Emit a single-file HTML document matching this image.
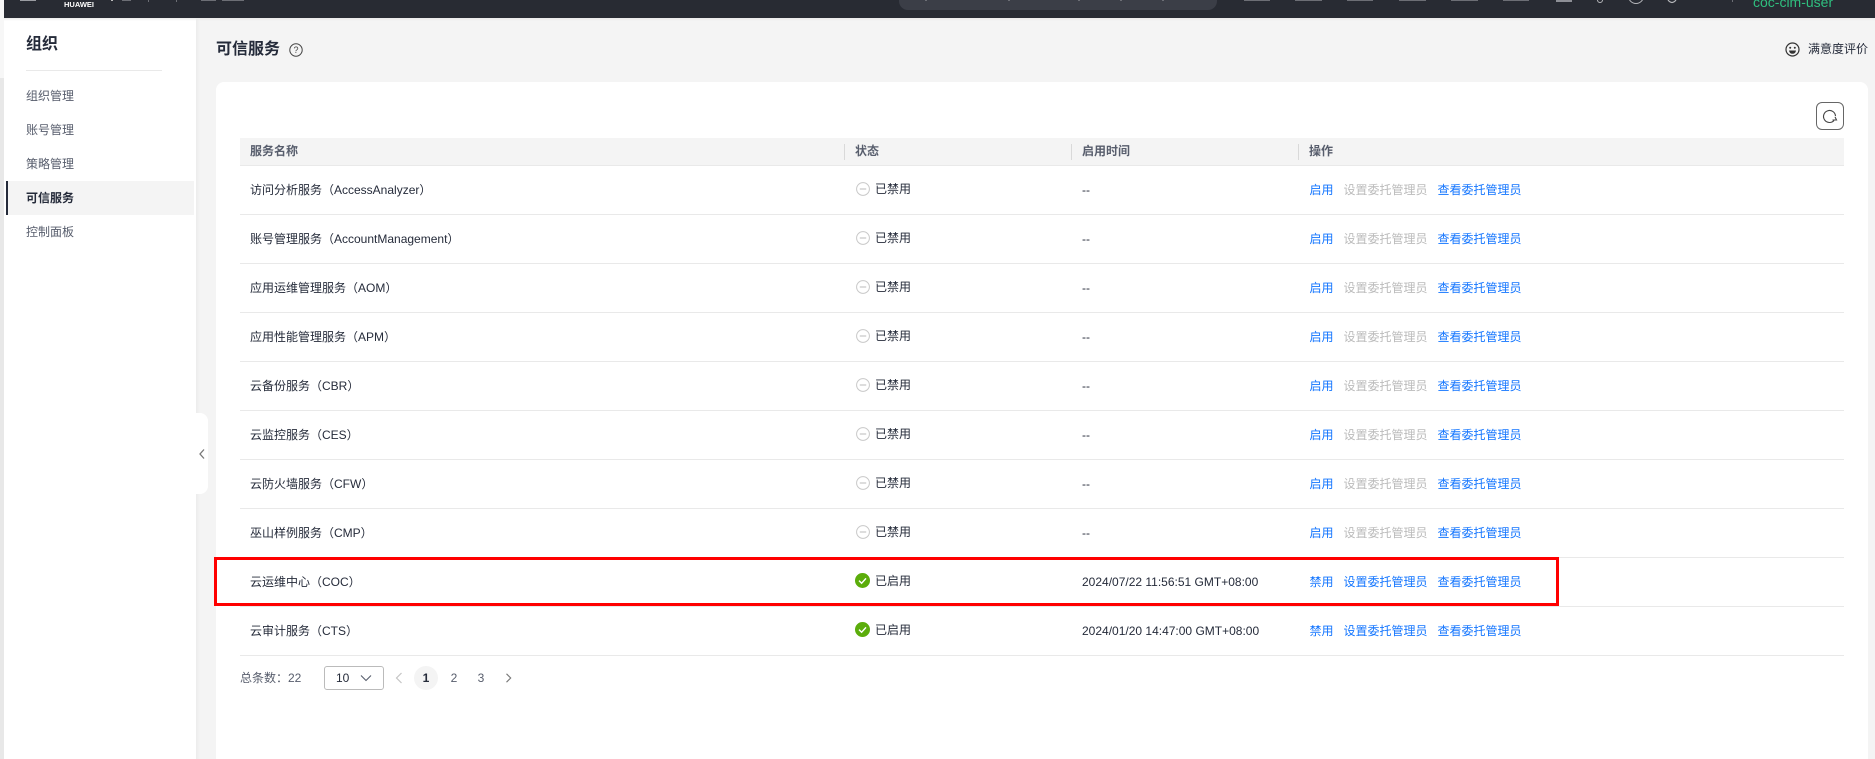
<!DOCTYPE html>
<html lang="zh-CN">
<head>
<meta charset="utf-8">
<title>可信服务</title>
<style>
html,body{margin:0;padding:0;width:1875px;height:759px;overflow:hidden;background:#f4f4f4}
body{position:relative;font-family:"Liberation Sans","Noto Sans CJK SC",sans-serif;font-size:12px;color:#252b3a}
div,span,svg{position:absolute;white-space:nowrap}
.b{background:#6c6e75;height:1px;top:0}
.m{left:26px;line-height:20px;color:#575d6c;width:120px}
.row{left:240px;width:1604px;height:48px;border-bottom:1px solid #e9e9e9}
.row span{line-height:48px;top:0}
.n{left:10px}
.st{left:635px;top:-1px!important}
.t{left:842px}
.row .t{top:-0.5px}
.a1{left:1069.5px;color:#1476ff}
.a2{left:1103.5px;color:#bbb}
.a3{left:1197.5px;color:#1476ff}
.h{line-height:26px;color:#575d6c;font-weight:bold;top:0}
.sep{width:1px;height:16px;top:6px;background:#d9d9d9}
.pg{top:666px;line-height:24px;width:24px;text-align:center;color:#575d6c}
</style>
</head>
<body>
<!-- left strip -->
<div style="left:0;top:0;width:4px;height:78px;background:#f7f7f7"></div>
<div style="left:0;top:78px;width:4px;height:681px;background:#e8e8e8"></div>

<!-- sidebar -->
<div style="left:4px;top:18px;width:192px;height:741px;background:#fff"></div>
<div style="left:196px;top:18px;width:4px;height:741px;background:linear-gradient(to right,#ececec,#f4f4f4)"></div>
<div style="left:26px;top:35px;font-size:16px;line-height:20px;font-weight:bold;color:#252b3a">组织</div>
<div style="left:26px;top:70px;width:136px;height:1px;background:#e9e9e9"></div>
<div class="m" style="top:86px">组织管理</div>
<div class="m" style="top:120px">账号管理</div>
<div class="m" style="top:154px">策略管理</div>
<div style="left:6px;top:181px;width:188px;height:34px;background:#f4f4f4"></div>
<div style="left:6px;top:181px;width:2px;height:34px;background:#252b3a"></div>
<div class="m" style="top:188px;font-weight:bold;color:#252b3a">可信服务</div>
<div class="m" style="top:222px">控制面板</div>

<!-- collapse handle -->
<div style="left:196px;top:413px;width:12px;height:81px;background:#fff;border-radius:0 8px 8px 0"></div>
<svg style="left:198px;top:448px" width="8" height="12" viewBox="0 0 8 12"><path d="M6 1.5 L2 6 L6 10.5" fill="none" stroke="#777" stroke-width="1.3"/></svg>

<!-- header -->
<div style="left:4px;top:0;width:1871px;height:18px;background:#282b33"></div>
<div style="left:4px;top:18px;width:1871px;height:3px;background:linear-gradient(#ebebeb,rgba(244,244,244,0))"></div>
<div class="b" style="left:20px;width:16px;background:#9a9ca2"></div>
<div style="left:64px;top:0;font-size:7.5px;line-height:9px;font-weight:bold;color:#fff">HUAWEI</div>
<div class="b" style="left:111px;width:2px;background:#bbb"></div>
<div class="b" style="left:122px;width:9px"></div>
<div class="b" style="left:148px;width:1px;height:2px"></div>
<div class="b" style="left:176px;width:1px;height:2px"></div>
<div class="b" style="left:201px;width:15px"></div>
<div class="b" style="left:222px;width:22px"></div>
<div style="left:899px;top:0;width:318px;height:10px;background:#3b3e47;border-radius:0 0 9px 9px"></div>
<div class="b" style="left:925px;width:2px"></div>
<div class="b" style="left:1008px;width:2px"></div>
<div class="b" style="left:1078px;width:2px"></div>
<div class="b" style="left:1120px;width:2px"></div>
<div class="b" style="left:1162px;width:2px"></div>
<div class="b" style="left:1244px;width:26px"></div>
<div class="b" style="left:1295px;width:27px"></div>
<div class="b" style="left:1347px;width:26px"></div>
<div class="b" style="left:1399px;width:27px"></div>
<div class="b" style="left:1451px;width:27px"></div>
<div class="b" style="left:1503px;width:26px"></div>
<div class="b" style="left:1556px;width:16px;height:2px;background:#8d8f96"></div>
<svg style="left:1590px;top:0" width="70" height="5" viewBox="0 0 70 5"><circle cx="10" cy="0" r="2.5" fill="none" stroke="#b5b6ba"/><circle cx="46" cy="-4" r="7.5" fill="none" stroke="#b5b6ba"/></svg>
<svg style="left:1666px;top:0" width="12" height="4" viewBox="0 0 12 4"><path d="M2 0 Q6 5 10 0" fill="none" stroke="#b5b6ba" stroke-width="1.2"/></svg>
<div class="b" style="left:1732px;width:1px;height:2px"></div>
<div style="left:1753px;top:-8px;font-size:14px;line-height:20px;color:#2fbf7f">coc-cim-user</div>

<!-- title -->
<div style="left:216px;top:40px;font-size:16px;line-height:20px;font-weight:bold;color:#252b3a">可信服务</div>
<svg style="left:289px;top:43px" width="14" height="14" viewBox="0 0 14 14"><circle cx="7" cy="7" r="6.2" fill="none" stroke="#444"/><text x="7" y="10" font-size="9" text-anchor="middle" fill="#444" font-family="Liberation Sans">?</text></svg>
<svg style="left:1785px;top:42px" width="15" height="15" viewBox="0 0 15 15"><circle cx="7.5" cy="7.5" r="6.5" fill="none" stroke="#333" stroke-width="1.2"/><circle cx="5.2" cy="5.8" r="1" fill="#333"/><circle cx="9.8" cy="5.8" r="1" fill="#333"/><path d="M4 8.5 H11 Q10.5 11.8 7.5 11.8 Q4.5 11.8 4 8.5Z" fill="#333"/></svg>
<div style="left:1808px;top:39px;line-height:20px;color:#252b3a">满意度评价</div>

<!-- card -->
<div style="left:216px;top:82px;width:1652px;height:677px;background:#fff;border-radius:8px 8px 0 0"></div>

<!-- refresh -->
<div style="left:1816px;top:102px;width:26px;height:26px;border:1px solid #666;border-radius:6px;background:#fff"></div>
<svg style="left:1821px;top:107px" width="18" height="18" viewBox="0 0 18 18"><path d="M13 13.5 A6 6 0 1 1 14.5 9" fill="none" stroke="#444" stroke-width="1.1"/><path d="M11.5 13 L15.5 13 L14 9.8" fill="none" stroke="#444" stroke-width="1.1"/></svg>

<!-- table head -->
<div style="left:240px;top:138px;width:1604px;height:27px;background:#f4f4f4;border-bottom:1px solid #e9e9e9">
<span class="h" style="left:10px">服务名称</span>
<span class="sep" style="left:604px"></span><span class="h" style="left:615px">状态</span>
<span class="sep" style="left:831px"></span><span class="h" style="left:842px">启用时间</span>
<span class="sep" style="left:1058px"></span><span class="h" style="left:1069px">操作</span>
</div>

<!-- rows -->
<div class="row" style="top:166px"><span class="n">访问分析服务（AccessAnalyzer）</span><svg style="left:616px;top:16px" width="14" height="14" viewBox="0 0 14 14"><circle cx="7" cy="7" r="6.4" fill="none" stroke="#c8c8c8"/><rect x="3.8" y="6.2" width="6.4" height="1.6" fill="#d5d5d5"/></svg><span class="st">已禁用</span><span class="t">--</span><span class="a1">启用</span><span class="a2">设置委托管理员</span><span class="a3">查看委托管理员</span></div>
<div class="row" style="top:215px"><span class="n">账号管理服务（AccountManagement）</span><svg style="left:616px;top:16px" width="14" height="14" viewBox="0 0 14 14"><circle cx="7" cy="7" r="6.4" fill="none" stroke="#c8c8c8"/><rect x="3.8" y="6.2" width="6.4" height="1.6" fill="#d5d5d5"/></svg><span class="st">已禁用</span><span class="t">--</span><span class="a1">启用</span><span class="a2">设置委托管理员</span><span class="a3">查看委托管理员</span></div>
<div class="row" style="top:264px"><span class="n">应用运维管理服务（AOM）</span><svg style="left:616px;top:16px" width="14" height="14" viewBox="0 0 14 14"><circle cx="7" cy="7" r="6.4" fill="none" stroke="#c8c8c8"/><rect x="3.8" y="6.2" width="6.4" height="1.6" fill="#d5d5d5"/></svg><span class="st">已禁用</span><span class="t">--</span><span class="a1">启用</span><span class="a2">设置委托管理员</span><span class="a3">查看委托管理员</span></div>
<div class="row" style="top:313px"><span class="n">应用性能管理服务（APM）</span><svg style="left:616px;top:16px" width="14" height="14" viewBox="0 0 14 14"><circle cx="7" cy="7" r="6.4" fill="none" stroke="#c8c8c8"/><rect x="3.8" y="6.2" width="6.4" height="1.6" fill="#d5d5d5"/></svg><span class="st">已禁用</span><span class="t">--</span><span class="a1">启用</span><span class="a2">设置委托管理员</span><span class="a3">查看委托管理员</span></div>
<div class="row" style="top:362px"><span class="n">云备份服务（CBR）</span><svg style="left:616px;top:16px" width="14" height="14" viewBox="0 0 14 14"><circle cx="7" cy="7" r="6.4" fill="none" stroke="#c8c8c8"/><rect x="3.8" y="6.2" width="6.4" height="1.6" fill="#d5d5d5"/></svg><span class="st">已禁用</span><span class="t">--</span><span class="a1">启用</span><span class="a2">设置委托管理员</span><span class="a3">查看委托管理员</span></div>
<div class="row" style="top:411px"><span class="n">云监控服务（CES）</span><svg style="left:616px;top:16px" width="14" height="14" viewBox="0 0 14 14"><circle cx="7" cy="7" r="6.4" fill="none" stroke="#c8c8c8"/><rect x="3.8" y="6.2" width="6.4" height="1.6" fill="#d5d5d5"/></svg><span class="st">已禁用</span><span class="t">--</span><span class="a1">启用</span><span class="a2">设置委托管理员</span><span class="a3">查看委托管理员</span></div>
<div class="row" style="top:460px"><span class="n">云防火墙服务（CFW）</span><svg style="left:616px;top:16px" width="14" height="14" viewBox="0 0 14 14"><circle cx="7" cy="7" r="6.4" fill="none" stroke="#c8c8c8"/><rect x="3.8" y="6.2" width="6.4" height="1.6" fill="#d5d5d5"/></svg><span class="st">已禁用</span><span class="t">--</span><span class="a1">启用</span><span class="a2">设置委托管理员</span><span class="a3">查看委托管理员</span></div>
<div class="row" style="top:509px"><span class="n">巫山样例服务（CMP）</span><svg style="left:616px;top:16px" width="14" height="14" viewBox="0 0 14 14"><circle cx="7" cy="7" r="6.4" fill="none" stroke="#c8c8c8"/><rect x="3.8" y="6.2" width="6.4" height="1.6" fill="#d5d5d5"/></svg><span class="st">已禁用</span><span class="t">--</span><span class="a1">启用</span><span class="a2">设置委托管理员</span><span class="a3">查看委托管理员</span></div>
<div class="row" style="top:558px"><span class="n">云运维中心（COC）</span><svg style="left:615px;top:15px" width="15" height="15" viewBox="0 0 15 15"><circle cx="7.5" cy="7.5" r="7.5" fill="#5bad0b"/><path d="M4 7.6 L6.6 10.2 L11 5.4" fill="none" stroke="#fff" stroke-width="1.4"/></svg><span class="st">已启用</span><span class="t">2024/07/22 11:56:51 GMT+08:00</span><span class="a1">禁用</span><span class="a2" style="color:#1476ff">设置委托管理员</span><span class="a3">查看委托管理员</span></div>
<div class="row" style="top:607px"><span class="n">云审计服务（CTS）</span><svg style="left:615px;top:15px" width="15" height="15" viewBox="0 0 15 15"><circle cx="7.5" cy="7.5" r="7.5" fill="#5bad0b"/><path d="M4 7.6 L6.6 10.2 L11 5.4" fill="none" stroke="#fff" stroke-width="1.4"/></svg><span class="st">已启用</span><span class="t">2024/01/20 14:47:00 GMT+08:00</span><span class="a1">禁用</span><span class="a2" style="color:#1476ff">设置委托管理员</span><span class="a3">查看委托管理员</span></div>

<!-- red highlight -->
<div style="left:214px;top:557px;width:1339px;height:43px;border:3px solid #f00"></div>

<!-- pagination -->
<div style="left:240px;top:668px;line-height:20px;color:#575d6c">总条数：22</div>
<div style="left:324px;top:666px;width:58px;height:22px;border:1px solid #bbb;border-radius:3px;background:#fff"></div>
<div style="left:336px;top:668px;line-height:20px;color:#252b3a">10</div>
<svg style="left:360px;top:674px" width="12" height="8" viewBox="0 0 12 8"><path d="M1 1.5 L6 6.5 L11 1.5" fill="none" stroke="#575d6c" stroke-width="1.1"/></svg>
<svg style="left:395px;top:672px" width="8" height="12" viewBox="0 0 8 12"><path d="M6.5 1 L1.5 6 L6.5 11" fill="none" stroke="#c4c4c4" stroke-width="1.2"/></svg>
<div style="left:414px;top:666px;width:24px;height:24px;border-radius:12px;background:#f4f4f4"></div>
<div class="pg" style="left:414px;font-weight:bold;color:#252b3a">1</div>
<div class="pg" style="left:442px">2</div>
<div class="pg" style="left:469px">3</div>
<svg style="left:505px;top:673px" width="7" height="10" viewBox="0 0 7 10"><path d="M1.5 0.8 L5.7 5 L1.5 9.2" fill="none" stroke="#777" stroke-width="1.1"/></svg>
</body>
</html>
